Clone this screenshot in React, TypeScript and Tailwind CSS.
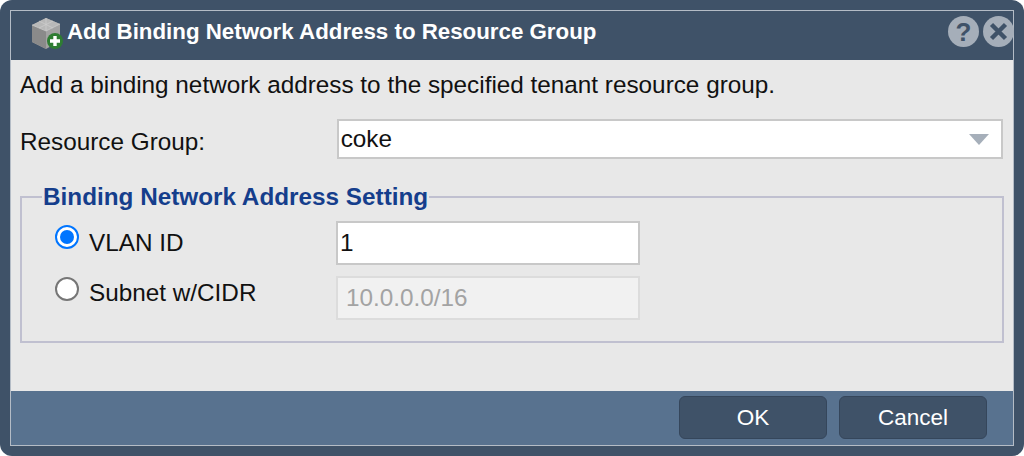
import React from 'react';

const CubeIcon = () => (
  <svg width="32" height="32" viewBox="0 0 32 32" className="shrink-0">
    <polygon points="14,0 28,6 28,23 14,31 0,24 0,7" fill="#a3a3a3" />
    <polygon points="14,0 28,6 14,13 0,7" fill="#b8b8b8" />
    <polygon points="0,7 14,13 14,31 0,24" fill="#8a8a8a" />
    <path d="M14 0v13M0 7l14 6 14-7M7 3l14 7M21 3l-14 7" stroke="#cfcfcf" strokeWidth="0.7" fill="none" />
    <circle cx="23" cy="23" r="8" fill="#2e7d32" />
    <path d="M23 18v10M18 23h10" stroke="#ffffff" strokeWidth="3.4" />
  </svg>
);

const RoundButton = ({ children }: { children: React.ReactNode }) => (
  <div className="w-[31px] h-[31px] rounded-full bg-[#a5aeb9] flex items-center justify-center text-[#3f5268] font-bold text-[26px] leading-none">
    {children}
  </div>
);

const Radio = ({ checked }: { checked?: boolean }) => (
  <div
    className={`w-6 h-6 rounded-full bg-white flex items-center justify-center border-2 ${
      checked ? 'border-[#0075ff]' : 'border-[#767676]'
    }`}
  >
    {checked && <div className="w-[14px] h-[14px] rounded-full bg-[#0075ff]" />}
  </div>
);

const FooterButton = ({ label }: { label: string }) => (
  <button className="w-[148px] h-[43px] rounded-[6px] bg-[#3f5268] border border-[#35465b] text-white text-[22.5px]">
    {label}
  </button>
);

export default function App() {
  return (
    <div className="w-[1024px] h-[456px] bg-white overflow-hidden font-['Liberation_Sans',Arial,sans-serif]">
      <div className="w-full h-full rounded-[12px] bg-[#3f5268] pt-[10px] pl-[10px] pr-[10px] pb-[10px]">
        <div className="w-[1004px] h-[436px] border border-[#b4bcc6] flex flex-col">
          {/* Title */}
          <div className="h-[49px] flex items-center pl-[21px] text-white">
            <div className="-mt-[4px]"><CubeIcon /></div>
            <span className="font-bold text-[22.3px] ml-[3px] -mt-[8px]">Add Binding Network Address to Resource Group</span>
            <div className="ml-auto -mr-[1px] flex gap-[4px] -mt-[8px]">
              <RoundButton>?</RoundButton>
              <RoundButton>
                <svg width="21" height="21" viewBox="0 0 21 21">
                  <path d="M3.5 3.5l14 14M17.5 3.5l-14 14" stroke="#3f5268" strokeWidth="4.4" />
                </svg>
              </RoundButton>
            </div>
          </div>

          {/* Body */}
          <div className="flex-1 bg-[#e8e8e8] pl-[9px] pr-[10px] text-[#111] text-[24.3px]">
            <div className="h-[50px] flex items-center leading-none">
              Add a binding network address to the specified tenant resource group.
            </div>
            <div className="flex items-center h-[40px] mt-[9px]">
              <div className="w-[317px] pt-[6px]">Resource Group:</div>
              <div className="w-[667px] h-[40px] bg-white border-2 border-[#c8c8c8] flex items-center justify-between pl-[2px] pr-[12px]">
                <span>coke</span>
                <div className="w-0 h-0 border-l-[10px] border-r-[10px] border-t-[11px] border-l-transparent border-r-transparent border-t-[#a6afba]" />
              </div>
            </div>

            <fieldset className="mt-[24px] w-[984px] h-[160px] border-2 border-[#c0c0d0] pl-[20px]">
              <legend className="text-[#153e8c] font-bold text-[24.3px] leading-[28px] px-[1px]">
                Binding Network Address Setting
              </legend>
              <div className="flex flex-col gap-[11px] mt-[10px]">
                <div className="flex items-center h-[44px]">
                  <div className="w-[24px] ml-[13px] -mt-[12px]"><Radio checked /></div>
                  <span className="w-[247px] ml-[10px]">VLAN ID</span>
                  <div className="w-[304px] h-[44px] bg-white border-2 border-[#c8c8c8] flex items-center pl-[2px]">1</div>
                </div>
                <div className="flex items-center h-[44px]">
                  <div className="w-[24px] ml-[13px] -mt-[18px]"><Radio /></div>
                  <span className="w-[247px] ml-[10px] -mt-[9px]">Subnet w/CIDR</span>
                  <div className="w-[304px] h-[44px] bg-[#f1f1f1] border-2 border-[#dcdcdc] flex items-center pl-[8px] text-[#a3a3a3]">10.0.0.0/16</div>
                </div>
              </div>
            </fieldset>
          </div>

          {/* Footer */}
          <div className="h-[54px] bg-[#58728f] flex items-center justify-end gap-[12px] pr-[26px] pb-[1px]">
            <FooterButton label="OK" />
            <FooterButton label="Cancel" />
          </div>
        </div>
      </div>
    </div>
  );
}
